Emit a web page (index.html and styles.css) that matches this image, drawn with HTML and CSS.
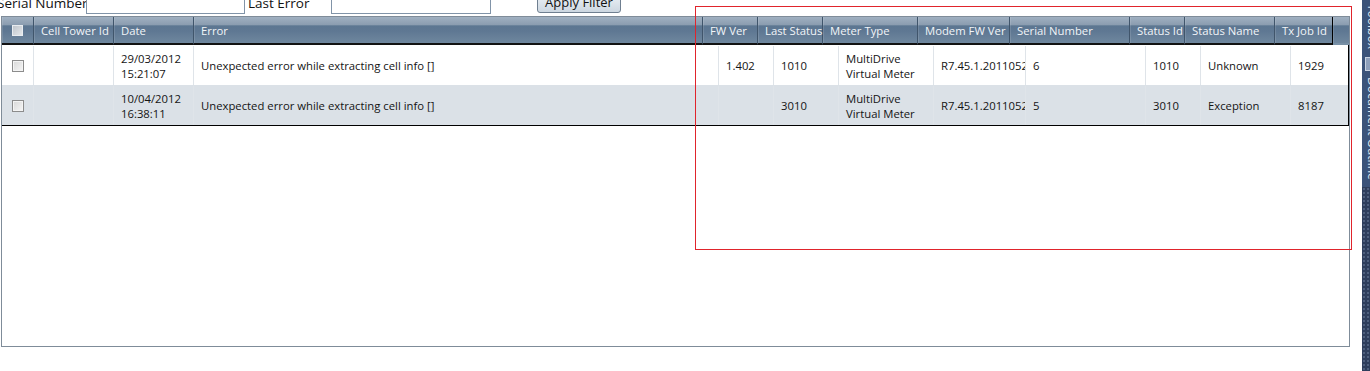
FILE: index.html
```html
<!DOCTYPE html>
<html lang="en">
<head>
    <meta charset="UTF-8">
    <title>Meter Errors</title>
    <link rel="stylesheet" href="styles.css">
</head>
<body>
    <div class="page">
        <div class="main">
            <div class="filters">
                <label class="filter-label serial">Serial Number</label>
                <input class="filter-input first" type="text">
                <label class="filter-label last">Last Error</label>
                <input class="filter-input second" type="text">
                <button class="apply" type="button">Apply Filter</button>
            </div>

            <div class="grid">
                <div class="grid-head">
                    <div class="hcell check"><span class="box head-box"></span></div>
                    <div class="hcell">Cell Tower Id</div>
                    <div class="hcell">Date</div>
                    <div class="hcell">Error</div>
                    <div class="hcell">FW Ver</div>
                    <div class="hcell">Last Status</div>
                    <div class="hcell">Meter Type</div>
                    <div class="hcell">Modem FW Ver</div>
                    <div class="hcell">Serial Number</div>
                    <div class="hcell">Status Id</div>
                    <div class="hcell">Status Name</div>
                    <div class="hcell end">Tx Job Id</div>
                    <div class="hcell filler"></div>
                </div>
                <div class="grid-rows">
                    <div class="row">
                        <div class="cell check"><span class="box"></span></div>
                        <div class="cell"></div>
                        <div class="cell">29/03/2012<br>15:21:07</div>
                        <div class="cell">Unexpected error while extracting cell info []</div>
                        <div class="cell">1.402</div>
                        <div class="cell">1010</div>
                        <div class="cell">MultiDrive<br>Virtual Meter</div>
                        <div class="cell">R7.45.1.20110525</div>
                        <div class="cell">6</div>
                        <div class="cell">1010</div>
                        <div class="cell">Unknown</div>
                        <div class="cell">1929</div>
                    </div>
                    <div class="row alt">
                        <div class="cell check"><span class="box"></span></div>
                        <div class="cell"></div>
                        <div class="cell">10/04/2012<br>16:38:11</div>
                        <div class="cell">Unexpected error while extracting cell info []</div>
                        <div class="cell"></div>
                        <div class="cell">3010</div>
                        <div class="cell">MultiDrive<br>Virtual Meter</div>
                        <div class="cell">R7.45.1.20110525</div>
                        <div class="cell">5</div>
                        <div class="cell">3010</div>
                        <div class="cell">Exception</div>
                        <div class="cell">8187</div>
                    </div>
                </div>
            </div>
        </div>

        <div class="sidebar">
            <div class="tabs">
                <span class="tab">Toolbox</span>
                <span class="tab-icon"></span>
                <span class="tab">Document Outline</span>
            </div>
            <div class="dots"></div>
        </div>

        <div class="annotation"></div>
    </div>
</body>
</html>
```

FILE: styles.css
```css
body {
    margin: 0;
    overflow: hidden;
    background: #ffffff;
    font-family: "Open Sans", "Noto Sans", sans-serif;
    color: #141414;
}
.page {
    position: relative;
    display: flex;
    width: 1400px;
    height: 371px;
}
.main {
    width: 1362px;
    flex-shrink: 0;
}

/* filter bar, scrolled up a bit */
.filters {
    display: flex;
    align-items: center;
    height: 22px;
    margin-top: -8px;
    font-size: 13.5px;
}
.filter-label {
    color: #111;
    white-space: nowrap;
}
.serial {
    margin-left: -3px;
    width: 89px;
}
.last {
    margin-left: 3px;
    width: 83px;
}
.filter-input {
    box-sizing: border-box;
    height: 22px;
    border: 1px solid #8194a8;
    padding: 0;
}
.first {
    width: 159px;
}
.second {
    width: 160px;
}
.apply {
    box-sizing: border-box;
    margin-left: 46px;
    width: 84px;
    height: 22px;
    margin-top: -2px;
    border: 1px solid #6f7f90;
    border-radius: 3px;
    background: linear-gradient(180deg, #f3f6f9, #dfe6ed 50%, #cdd7e1);
    font-family: inherit;
    font-size: 13px;
    color: #111;
    padding: 0;
}

/* data grid */
.grid {
    box-sizing: border-box;
    margin: 2px 0 0 1px;
    width: 1349px;
    height: 331px;
    border: 1px solid #7f8c99;
    font-size: 11.3px;
}
.grid-head {
    display: grid;
    grid-template-columns: 32px 80px 80px 509px 55px 65px 95px 92px 120px 55px 90px 58px 1fr;
    height: 28px;
}
.hcell {
    box-sizing: border-box;
    display: flex;
    align-items: center;
    padding: 1px 0 0 7px;
    color: #f2f5f8;
    white-space: nowrap;
    background: linear-gradient(180deg, #a0b0c1 0%, #8b9db0 30%, #5c7691 34%, #5f7893 55%, #6f879e 100%);
    border-right: 1px solid #40556b;
    border-bottom: 2px solid #121212;
    box-shadow: inset 1px 0 rgba(255, 255, 255, 0.12);
}
.hcell.end {
    border-right-color: #000;
}
.hcell.filler {
    border-right: none;
    border-bottom-color: #7890a6;
}
.hcell.check,
.cell.check {
    justify-content: center;
    padding-left: 0;
}
.box {
    box-sizing: border-box;
    width: 12px;
    height: 12px;
    border: 1px solid #8c8c8c;
    background: linear-gradient(135deg, #d8d8d8, #f6f6f6);
    box-shadow: inset 0 0 0 1px #f4f4f4;
}
.head-box {
    width: 11px;
    height: 11px;
    border-color: #e8ecf0;
    background: linear-gradient(135deg, #bfc5cc, #e4e7ea);
    box-shadow: none;
}

.grid-rows {
    border-right: 1px solid #000;
    border-bottom: 1px solid #000;
}
.row {
    box-sizing: border-box;
    display: grid;
    grid-template-columns: 32px 80px 80px 525px 55px 65px 95px 92px 120px 55px 90px 57px;
    height: 40px;
    padding-top: 1px;
    background: #ffffff;
}
.row.alt {
    background: #dbe1e7;
}
.cell {
    box-sizing: border-box;
    display: flex;
    align-items: center;
    padding-left: 7px;
    line-height: 15px;
    white-space: nowrap;
    overflow: hidden;
    border-right: 1px solid #dfe4e9;
}
.cell:last-child {
    border-right: none;
}

/* docked tool windows on the right */
.sidebar {
    width: 24px;
    flex-shrink: 0;
    display: flex;
    flex-direction: column;
    background: #2f3f5e;
}
.tabs {
    height: 187px;
    background: #3b5379;
    display: flex;
    flex-direction: column;
    align-items: flex-start;
    padding-left: 2px;
    color: #dfe6f0;
    font-size: 12px;
}
.tab {
    writing-mode: vertical-rl;
    white-space: nowrap;
    padding: 4px 0 6px;
}
.tab-icon {
    width: 11px;
    height: 12px;
    margin: 2px 0 2px 1px;
    border: 1px solid #c8d2e0;
    background: #8ea0bb;
}
.dots {
    flex: 1;
    background-color: #2e3e5c;
    background-image: radial-gradient(circle, #50617f 0.7px, transparent 1.2px);
    background-size: 4px 4px;
}

/* red review box drawn over the grid */
.annotation {
    position: absolute;
    left: 695px;
    top: 6px;
    width: 657px;
    height: 244px;
    box-sizing: border-box;
    border: 1px solid #e0242c;
    pointer-events: none;
}
```
